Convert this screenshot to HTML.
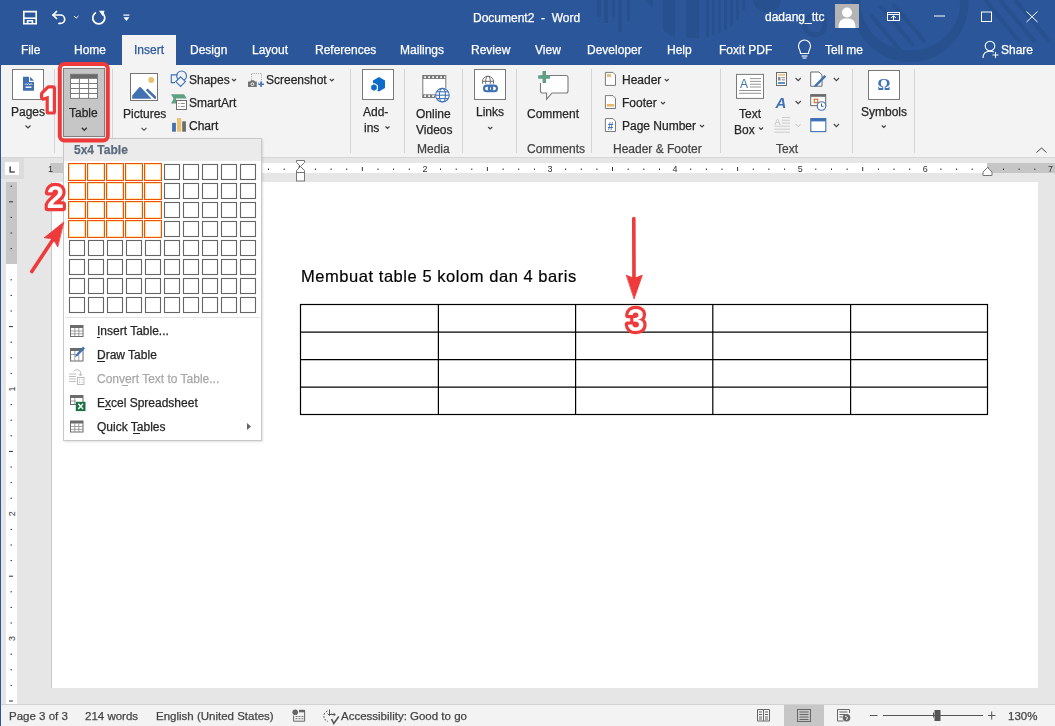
<!DOCTYPE html>
<html><head><meta charset="utf-8">
<style>
*{margin:0;padding:0;box-sizing:border-box}
html,body{width:1055px;height:726px;overflow:hidden;background:#E6E6E6;font-family:"Liberation Sans",sans-serif;color:#262626}
.a{position:absolute}
.t{position:absolute;white-space:nowrap;font-size:12px;line-height:14px;will-change:transform;-webkit-text-stroke:0.25px currentColor}
.w{color:#fff}
#title{left:0;top:0;width:1055px;height:65px;background:#2B579A}
#ribbon{left:0;top:65px;width:1055px;height:93px;background:#F3F3F3;border-bottom:1px solid #D6D6D6}
.sep{position:absolute;width:1px;background:#D4D4D4;top:69px;height:84px}
.gl{color:#444}
svg{position:absolute;overflow:visible}
</style></head><body>
<!-- TITLE BAR -->
<div id="title" class="a"></div>
<svg class="a" style="left:0;top:0" width="1055" height="64">
 <g fill="#27508F">
  <rect x="597" y="0" width="4" height="17"/><rect x="604" y="0" width="4" height="23"/><rect x="612" y="0" width="3" height="18"/>
  <rect x="618" y="0" width="4" height="32"/><rect x="627" y="0" width="3" height="21"/>
  <polygon points="646,0 653,0 653,9"/>
  <polygon points="663,0 675,0 675,38 663,30"/>
  <rect x="686" y="0" width="13" height="38"/>
  <rect x="706" y="0" width="3" height="37"/><rect x="712" y="0" width="3" height="35"/><rect x="718" y="0" width="3" height="33"/>
  <rect x="724" y="0" width="3" height="30"/><rect x="730" y="0" width="3" height="26"/><rect x="736" y="0" width="3" height="20"/><rect x="742" y="0" width="3" height="10"/>
  <path d="M852,0 A58,58 0 0 0 969,0 L961,0 A50,50 0 0 1 860,0 Z"/>
  <path d="M753,0 A14,12 0 0 0 781,0 Z"/>
 </g>
 <circle cx="815" cy="25" r="10" fill="none" stroke="#27508F" stroke-width="5"/>
 <circle cx="910" cy="4" r="54" fill="none" stroke="#27508F" stroke-width="8"/>
 <g stroke="#27508F" stroke-width="4">
  <line x1="870" y1="14" x2="900" y2="50"/><line x1="880" y1="6" x2="914" y2="46"/><line x1="893" y1="4" x2="925" y2="42"/>
  <line x1="985" y1="0" x2="1020" y2="42"/><line x1="1000" y1="0" x2="1035" y2="42"/><line x1="1015" y1="0" x2="1050" y2="42"/>
 </g>
</svg>
<!-- QAT icons -->
<svg style="left:0;top:0" width="140" height="36">
 <g fill="none" stroke="#fff" stroke-width="1.6">
  <path d="M23.8,11.6 H36.2 V23.8 H23.8 Z"/>
  <path d="M23.8,18.2 H36.2"/>
  <path d="M27.6,23.8 V20.8 H32.4 V23.8"/>
 </g>
 <g fill="none" stroke="#fff" stroke-width="1.7" stroke-linecap="round">
  <path d="M53,15 H60.5 A4.2,4.2 0 0 1 60.5,23.4 H59"/>
  <path d="M56.5,11.5 L53,15 L56.5,18.5"/>
 </g>
 <path d="M74,16 L76.2,18.2 L78.4,16" fill="none" stroke="#fff" stroke-width="1"/>
 <g fill="none" stroke="#fff" stroke-width="1.7">
  <path d="M96,12.5 A6,6 0 1 0 101.5,12.5"/>
 </g>
 <path d="M99,10.8 L104.5,10.8 L102.8,16.2 Z" fill="#fff"/>
 <rect x="123.4" y="14.5" width="6" height="1.2" fill="#fff"/>
 <path d="M123.4,17.2 H129.4 L126.4,21 Z" fill="#fff"/>
</svg>
<div class="t w" style="left:473px;top:11px">Document2&nbsp; -&nbsp; Word</div>
<div class="t w" style="left:765px;top:10px">dadang_ttc</div>
<div class="a" style="left:835px;top:4px;width:24px;height:24px;background:#B4B4B4;overflow:hidden">
 <svg style="left:0;top:0" width="24" height="24"><circle cx="12" cy="8.5" r="5" fill="#fff"/><path d="M3.5,24 C3.5,16 7,14.5 12,14.5 C17,14.5 20.5,16 20.5,24 Z" fill="#fff"/></svg>
</div>
<svg style="left:880px;top:0" width="175" height="36">
 <g fill="none" stroke="#fff" stroke-width="1">
  <rect x="7.5" y="12.5" width="12" height="8"/>
  <line x1="7.5" y1="14.5" x2="19.5" y2="14.5"/>
  <path d="M11,18 L13.5,15.8 L16,18 M13.5,16 V20.5"/>
  <line x1="54" y1="16" x2="65" y2="16"/>
  <rect x="101.5" y="12" width="10" height="9.5"/>
  <path d="M146.5,11.5 L157.5,22 M157.5,11.5 L146.5,22"/>
 </g>
</svg>
<!-- TABS -->
<div class="a" style="left:122px;top:35px;width:54px;height:30px;background:#F3F3F3"></div>
<div class="t w" style="left:21px;top:43px">File</div>
<div class="t w" style="left:74px;top:43px">Home</div>
<div class="t" style="left:134px;top:43px;color:#2B579A">Insert</div>
<div class="t w" style="left:190px;top:43px">Design</div>
<div class="t w" style="left:252px;top:43px">Layout</div>
<div class="t w" style="left:315px;top:43px">References</div>
<div class="t w" style="left:400px;top:43px">Mailings</div>
<div class="t w" style="left:471px;top:43px">Review</div>
<div class="t w" style="left:535px;top:43px">View</div>
<div class="t w" style="left:587px;top:43px">Developer</div>
<div class="t w" style="left:667px;top:43px">Help</div>
<div class="t w" style="left:719px;top:43px">Foxit PDF</div>
<div class="t w" style="left:825px;top:43px">Tell me</div>
<div class="t w" style="left:1001px;top:43px">Share</div>
<svg style="left:795px;top:38px" width="240" height="24">
 <g fill="none" stroke="#fff" stroke-width="1.1">
  <path d="M5.5,15.5 C5.5,12 3.5,11 3.5,8 A6,6 0 0 1 15.5,8 C15.5,11 13.5,12 13.5,15.5 Z"/>
  <line x1="6.5" y1="18" x2="12.5" y2="18"/><line x1="7.5" y1="20" x2="11.5" y2="20"/>
  <circle cx="195" cy="8" r="4.8"/>
  <path d="M188,20 C188,15.5 190.5,13.2 195,13.2 C196.5,13.2 197.8,13.5 198.8,14"/>
  <path d="M197.5,17 H203.5 M200.5,14 V20"/>
 </g>
</svg>
<!-- RIBBON -->

<div id="ribbon" class="a"></div>
<div class="sep" style="left:54px"></div>
<div class="sep" style="left:112px"></div>
<div class="sep" style="left:350px"></div>
<div class="sep" style="left:404px"></div>
<div class="sep" style="left:462px"></div>
<div class="sep" style="left:516px"></div>
<div class="sep" style="left:591px"></div>
<div class="sep" style="left:720px"></div>
<div class="sep" style="left:852px"></div>
<div class="sep" style="left:914px"></div>
<!-- Pages -->
<div class="a" style="left:12px;top:69px;width:32px;height:31px;background:#fff;border:1px solid #7A7A7A"></div>
<svg style="left:0;top:64px" width="120" height="90">
 <path d="M23,12.8 H29 V18 H34 V26.8 H23 Z" fill="#3F6FB1"/>
 <path d="M30.1,12.8 L34,16.8 H30.1 Z" fill="#3F6FB1"/>
 <path d="M25,20.8 L26.2,19.6 L27.4,20.8 L28.6,19.6 L29.8,20.8 L31,19.6 L32.2,20.8" fill="none" stroke="#fff" stroke-width="0.9"/>
 <rect x="25.5" y="22.5" width="6" height="1.4" fill="#fff"/>
 <path d="M25.5,61.5 L28,64 L30.5,61.5" fill="none" stroke="#444" stroke-width="1.2"/>
</svg>
<div class="t" style="left:11px;top:105px">Pages</div>
<!-- Table pressed -->
<div class="a" style="left:63px;top:68px;width:42px;height:69px;background:#C6C6C6;border:1px solid #808080"></div>
<svg style="left:0;top:64px" width="120" height="90">
 <rect x="70" y="9.9" width="28" height="25" fill="#fff"/>
 <rect x="70" y="9.9" width="28" height="4.9" fill="#6B6B6B"/>
 <g fill="none" stroke="#7A7A7A" stroke-width="1">
  <rect x="70.5" y="10.4" width="27" height="24"/>
  <line x1="79.4" y1="14.5" x2="79.4" y2="34.5"/><line x1="88.6" y1="14.5" x2="88.6" y2="34.5"/>
  <line x1="70.5" y1="19.5" x2="97.5" y2="19.5"/><line x1="70.5" y1="24.5" x2="97.5" y2="24.5"/><line x1="70.5" y1="29.5" x2="97.5" y2="29.5"/>
 </g>
 <path d="M81.8,63.8 L84.3,66.3 L86.8,63.8" fill="none" stroke="#333" stroke-width="1.3"/>
</svg>
<div class="t" style="left:69px;top:106px">Table</div>
<!-- Pictures -->
<div class="a" style="left:130px;top:73px;width:28px;height:28px;background:#fff;border:1px solid #737373"></div>
<svg style="left:0;top:64px" width="360" height="90">
 <circle cx="151.2" cy="16" r="2.9" fill="#EBC16D"/>
 <path d="M132.2,34.8 V31.5 L139.3,23.3 Q140,22.6 140.8,23.3 L151.5,34.8 Z" fill="#4372B3"/>
 <path d="M145.8,26.2 L147.6,24.6 L156,32.4 V34.8 H154.4 Z" fill="#4372B3"/>
 <path d="M141.5,63.8 L144,66.3 L146.5,63.8" fill="none" stroke="#444" stroke-width="1.1"/>
 <!-- shapes -->
 <g fill="none" stroke="#3D72B8" stroke-width="1.15">
  <path d="M177.5,10.8 H171.3 V18.6 H175"/>
  <circle cx="181.6" cy="11.9" r="4.9"/>
 </g>
 <path d="M180.6,12.8 L185.4,17.6 L180.6,22.4 L175.8,17.6 Z" fill="#F3F3F3" stroke="#3D72B8" stroke-width="1.15"/>
 <path d="M232,15 L234,17 L236,15" fill="none" stroke="#444" stroke-width="1.2"/>
 <!-- smartart -->
 <path d="M171,30.2 H184 L186.8,34.5 H176 V39.5 H171 L173.6,34.8 Z" fill="#5FA084"/>
 <rect x="176.5" y="36.5" width="10" height="9" fill="#fff" stroke="#6E6E6E" stroke-width="1"/>
 <g fill="#8A8A8A"><rect x="178.3" y="39" width="1.2" height="1"/><rect x="180.8" y="39" width="4" height="1"/><rect x="178.3" y="42" width="1.2" height="1"/><rect x="180.8" y="42" width="4" height="1"/></g>
 <!-- chart -->
 <rect x="172.1" y="58.8" width="3.8" height="8.9" fill="#4372B3"/>
 <rect x="177" y="54.1" width="4.2" height="13.6" fill="#EBC16D"/>
 <rect x="182.2" y="57.3" width="3.7" height="10.4" fill="#6B6B6B"/>
 <!-- screenshot -->
 <rect x="251.5" y="9.5" width="10" height="9.5" fill="none" stroke="#8E8E8E" stroke-width="0.8" stroke-dasharray="1,1.2"/>
 <path d="M248,17.6 H250 L251,16.2 H254 L255,17.6 H256.8 V22.9 H248 Z" fill="#737373"/>
 <circle cx="252.4" cy="20.2" r="1.4" fill="none" stroke="#fff" stroke-width="0.9"/>
 <path d="M258.3,20.2 H263.9 M261.1,17.4 V23" stroke="#3D72B8" stroke-width="1.6"/>
 <path d="M329.8,15 L331.8,17 L333.8,15" fill="none" stroke="#444" stroke-width="1.2"/>
</svg>
<div class="t" style="left:123px;top:107px">Pictures</div>
<div class="t" style="left:189px;top:73px">Shapes</div>
<div class="t" style="left:189px;top:96px">SmartArt</div>
<div class="t" style="left:189px;top:119px">Chart</div>
<div class="t" style="left:266px;top:73px">Screenshot</div>


<!-- Add-ins -->
<div class="a" style="left:362px;top:69px;width:32px;height:31px;background:#fff;border:1px solid #7A7A7A"></div>
<div class="a" style="left:474px;top:69px;width:32px;height:31px;background:#fff;border:1px solid #7A7A7A"></div>
<div class="a" style="left:868px;top:70px;width:32px;height:30px;background:#fff;border:1px solid #7A7A7A"></div>
<svg style="left:0;top:0" width="1055" height="160">
 <path d="M379,77 L385,80.5 V88 L379,91.5 L373,88 V80.5 Z" fill="#0B6CCB"/>
 <path d="M374,83.6 L377.4,85.5 V89.5 L374,91.4 L370.6,89.5 V85.5 Z" fill="#0B6CCB" stroke="#fff" stroke-width="1.2"/>
 <path d="M385.5,126.5 L387.5,128.5 L389.5,126.5" fill="none" stroke="#444" stroke-width="1.2"/>
 <!-- online video -->
 <rect x="422.8" y="75.5" width="23" height="22" fill="#fff" stroke="#7A7A7A" stroke-width="1"/>
 <rect x="422.8" y="75.5" width="23" height="3.5" fill="#7A7A7A"/>
 <rect x="422.8" y="94.3" width="23" height="3.5" fill="#7A7A7A"/>
 <g fill="#fff"><rect x="424.2" y="76.3" width="1.8" height="1.8"/><rect x="428.2" y="76.3" width="1.8" height="1.8"/><rect x="432.2" y="76.3" width="1.8" height="1.8"/><rect x="436.2" y="76.3" width="1.8" height="1.8"/><rect x="440.2" y="76.3" width="1.8" height="1.8"/><rect x="444" y="76.3" width="1.3" height="1.8"/>
 <rect x="424.2" y="95.2" width="1.8" height="1.8"/><rect x="428.2" y="95.2" width="1.8" height="1.8"/><rect x="432.2" y="95.2" width="1.8" height="1.8"/></g>
 <circle cx="442.4" cy="95.2" r="7.6" fill="#fff"/>
 <g fill="none" stroke="#3F72B5" stroke-width="1.1">
  <circle cx="442.4" cy="95.2" r="6.8"/><ellipse cx="442.4" cy="95.2" rx="3" ry="6.8"/>
  <line x1="435.6" y1="95.2" x2="449.2" y2="95.2"/><line x1="436.6" y1="91.8" x2="448.2" y2="91.8"/><line x1="436.6" y1="98.6" x2="448.2" y2="98.6"/>
 </g>
 <!-- links -->
 <g fill="none" stroke="#6B6B6B" stroke-width="1">
  <circle cx="488" cy="81.8" r="5.6"/><ellipse cx="488" cy="81.8" rx="2.4" ry="5.6"/><line x1="482.4" y1="81.3" x2="493.6" y2="81.3"/>
 </g>
 <rect x="481" y="83.8" width="18" height="9.5" fill="#fff"/>
 <g fill="none" stroke="#3F72B5" stroke-width="2.1">
  <rect x="484" y="85.6" width="8.2" height="5.6" rx="2.8"/><rect x="488.8" y="85.6" width="8.2" height="5.6" rx="2.8"/>
 </g>
 <path d="M488.2,127 L490.2,129 L492.2,127" fill="none" stroke="#444" stroke-width="1.2"/>
 <!-- comment -->
 <path d="M541.5,75.5 H566 A2,2 0 0 1 568,77.5 V91 A2,2 0 0 1 566,93 H552 L546.6,99.2 V93 H542.2 A1.7,1.7 0 0 1 540.5,91.3 V83" fill="#fff" stroke="#7A7A7A" stroke-width="1.1"/>
 <path d="M542.5,71 H546 V75.3 H550 V78.8 H546 V83 H542.5 V78.8 H538.2 V75.3 H542.5 Z" fill="#5FA084"/>
 <!-- header footer icons -->
 <g fill="#fff" stroke="#7A7A7A" stroke-width="1">
  <path d="M605.4,72.4 H613 L615.5,75 V85.4 H605.4 Z"/>
  <path d="M605.4,95.6 H613 L615.5,98.2 V108.5 H605.4 Z"/>
  <path d="M605.4,118.6 H613 L615.5,121.2 V131.5 H605.4 Z"/>
 </g>
 <rect x="606.8" y="74.2" width="4.2" height="2.6" fill="#E8B86A"/>
 <rect x="606.8" y="104" width="7.3" height="2.6" fill="#E8B86A"/>
 <text x="610.6" y="130" font-family="Liberation Sans" font-weight="bold" font-size="10" fill="#3F72B5" text-anchor="middle">#</text>
 <g fill="none" stroke="#444" stroke-width="1.1">
  <path d="M664.8,79 L666.8,81 L668.8,79"/><path d="M661,102 L663,104 L665,102"/><path d="M700,125 L702,127 L704,125"/>
  <path d="M759,127.5 L761,129.5 L763,127.5"/>
  <path d="M795.6,78 L798.2,80.6 L800.8,78"/><path d="M795.6,101 L798.2,103.6 L800.8,101"/>
  <path d="M833.8,78 L836.4,80.6 L839,78"/><path d="M833.8,124 L836.4,126.6 L839,124"/>
  <path d="M881.8,125.5 L883.8,127.5 L885.8,125.5"/>
 </g>
 <path d="M795.6,124 L798.2,126.6 L800.8,124" fill="none" stroke="#BDBDBD" stroke-width="1"/>
 <path d="M1036.5,152.5 L1041.5,148 L1046.5,152.5" fill="none" stroke="#444" stroke-width="1"/>
 <!-- text box -->
 <rect x="736.5" y="74.4" width="27" height="24" fill="#fff" stroke="#7A7A7A" stroke-width="1"/>
 <text x="740" y="87.5" font-family="Liberation Sans" font-size="12" fill="#3F72B5">A</text>
 <g stroke="#8A8A8A" stroke-width="0.9"><line x1="750" y1="78.6" x2="761" y2="78.6"/><line x1="750" y1="81.4" x2="761" y2="81.4"/><line x1="750" y1="84.2" x2="761" y2="84.2"/><line x1="750" y1="87" x2="761" y2="87"/><line x1="739" y1="90.5" x2="761" y2="90.5"/><line x1="739" y1="93.3" x2="761" y2="93.3"/></g>
 <!-- quick parts -->
 <rect x="776.5" y="72.5" width="10" height="13" fill="#fff" stroke="#6B6B6B" stroke-width="1"/>
 <rect x="778" y="74.2" width="7" height="1.4" fill="#E8B86A"/>
 <rect x="778" y="77" width="2.5" height="3.5" fill="#8A8A8A"/>
 <rect x="781.5" y="77.2" width="3.5" height="1" fill="#8A8A8A"/><rect x="781.5" y="79.4" width="3.5" height="1" fill="#8A8A8A"/>
 <rect x="778" y="82.2" width="7" height="1.6" fill="#3F72B5"/>
 <!-- wordart -->
 <text x="775.5" y="107.6" font-family="Liberation Sans" font-weight="bold" font-style="italic" font-size="15" fill="#3F72B5">A</text>
 <!-- drop cap -->
 <text x="774.5" y="125" font-family="Liberation Sans" font-size="9" fill="#BDBDBD">A</text>
 <g stroke="#C8C8C8" stroke-width="0.9"><line x1="782" y1="117.5" x2="790" y2="117.5"/><line x1="782" y1="120.3" x2="790" y2="120.3"/><line x1="782" y1="123.1" x2="790" y2="123.1"/><line x1="774.5" y1="126.2" x2="790" y2="126.2"/><line x1="774.5" y1="129.2" x2="790" y2="129.2"/><line x1="774.5" y1="132.2" x2="790" y2="132.2"/></g>
 <!-- signature -->
 <path d="M810.7,72 H819 L822,75 V86.2 H810.7 Z" fill="#fff" stroke="#6B6B6B" stroke-width="1"/>
 <path d="M824.5,75 L826.2,76.7 L816.5,86.4 L814,87 L814.8,84.7 Z" fill="#3F72B5"/>
 <!-- date time -->
 <rect x="810.7" y="94.6" width="15" height="11" fill="#fff" stroke="#6B6B6B" stroke-width="1"/>
 <rect x="810.7" y="94.6" width="15" height="2.2" fill="#6B6B6B"/>
 <rect x="814.2" y="99.2" width="3.5" height="3.5" fill="none" stroke="#D86A1C" stroke-width="1.1"/>
 <circle cx="821.5" cy="106" r="4.3" fill="#fff" stroke="#3F72B5" stroke-width="1.1"/>
 <path d="M821.5,103.5 V106.3 H823.5" fill="none" stroke="#444" stroke-width="0.9"/>
 <!-- object -->
 <rect x="810.8" y="118.6" width="15" height="13" fill="#fff" stroke="#3F72B5" stroke-width="1.1"/>
 <rect x="810.8" y="118.6" width="15" height="2.8" fill="#3F72B5"/>
 <!-- omega -->
 <text x="884" y="90" font-family="Liberation Serif" font-weight="bold" font-size="16" fill="#3F72B5" text-anchor="middle">Ω</text>
</svg>
<div class="t" style="left:363px;top:105px">Add-</div>
<div class="t" style="left:364px;top:121px">ins</div>
<div class="t" style="left:416px;top:107px">Online</div>
<div class="t" style="left:416px;top:123px">Videos</div>
<div class="t gl" style="left:417px;top:142px">Media</div>
<div class="t" style="left:476px;top:105px">Links</div>
<div class="t" style="left:527px;top:107px">Comment</div>
<div class="t gl" style="left:527px;top:142px">Comments</div>
<div class="t" style="left:622px;top:73px">Header</div>
<div class="t" style="left:622px;top:96px">Footer</div>
<div class="t" style="left:622px;top:119px">Page Number</div>
<div class="t gl" style="left:613px;top:142px">Header &amp; Footer</div>
<div class="t" style="left:739px;top:107px">Text</div>
<div class="t" style="left:734px;top:123px">Box</div>
<div class="t gl" style="left:776px;top:142px">Text</div>
<div class="t" style="left:861px;top:105px">Symbols</div>

<!-- DOC AREA -->
<!-- RULERS -->
<div class="a" style="left:1px;top:158px;width:23px;height:21px;background:#DCDCDC"></div>
<div class="a" style="left:5px;top:162px;width:14px;height:13px;background:#fff"></div>
<svg style="left:0;top:0" width="30" height="180"><path d="M10.2,166.5 V172 H14.8" fill="none" stroke="#555" stroke-width="1.7"/></svg>
<div class="a" style="left:50px;top:163px;width:1005px;height:10px;background:#fff"></div>
<div class="a" style="left:50px;top:163px;width:125px;height:10px;background:#C6C6C6"></div>
<div class="a" style="left:987px;top:163px;width:68px;height:10px;background:#C6C6C6"></div>
<svg style="left:0;top:0" width="1055" height="190">
 <g fill="#333" font-family="Liberation Sans" font-size="9">
<text x="50.5" y="172" text-anchor="middle">1</text>
<rect x="64.7" y="168.5" width="1" height="1.5"/>
<rect x="80.4" y="168.5" width="1" height="1.5"/>
<rect x="96.0" y="168.5" width="1" height="1.5"/>
<rect x="111.6" y="167" width="1" height="4"/>
<rect x="127.3" y="168.5" width="1" height="1.5"/>
<rect x="142.9" y="168.5" width="1" height="1.5"/>
<rect x="158.6" y="168.5" width="1" height="1.5"/>
<rect x="189.8" y="168.5" width="1" height="1.5"/>
<rect x="205.5" y="168.5" width="1" height="1.5"/>
<rect x="221.1" y="168.5" width="1" height="1.5"/>
<rect x="236.8" y="167" width="1" height="4"/>
<rect x="252.4" y="168.5" width="1" height="1.5"/>
<rect x="268.0" y="168.5" width="1" height="1.5"/>
<rect x="283.7" y="168.5" width="1" height="1.5"/>
<text x="299.8" y="172" text-anchor="middle">1</text>
<rect x="314.9" y="168.5" width="1" height="1.5"/>
<rect x="330.6" y="168.5" width="1" height="1.5"/>
<rect x="346.2" y="168.5" width="1" height="1.5"/>
<rect x="361.8" y="167" width="1" height="4"/>
<rect x="377.5" y="168.5" width="1" height="1.5"/>
<rect x="393.1" y="168.5" width="1" height="1.5"/>
<rect x="408.8" y="168.5" width="1" height="1.5"/>
<text x="424.9" y="172" text-anchor="middle">2</text>
<rect x="440.0" y="168.5" width="1" height="1.5"/>
<rect x="455.7" y="168.5" width="1" height="1.5"/>
<rect x="471.3" y="168.5" width="1" height="1.5"/>
<rect x="486.9" y="167" width="1" height="4"/>
<rect x="502.6" y="168.5" width="1" height="1.5"/>
<rect x="518.2" y="168.5" width="1" height="1.5"/>
<rect x="533.9" y="168.5" width="1" height="1.5"/>
<text x="550.0" y="172" text-anchor="middle">3</text>
<rect x="565.1" y="168.5" width="1" height="1.5"/>
<rect x="580.8" y="168.5" width="1" height="1.5"/>
<rect x="596.4" y="168.5" width="1" height="1.5"/>
<rect x="612.0" y="167" width="1" height="4"/>
<rect x="627.7" y="168.5" width="1" height="1.5"/>
<rect x="643.3" y="168.5" width="1" height="1.5"/>
<rect x="659.0" y="168.5" width="1" height="1.5"/>
<text x="675.1" y="172" text-anchor="middle">4</text>
<rect x="690.2" y="168.5" width="1" height="1.5"/>
<rect x="705.9" y="168.5" width="1" height="1.5"/>
<rect x="721.5" y="168.5" width="1" height="1.5"/>
<rect x="737.1" y="167" width="1" height="4"/>
<rect x="752.8" y="168.5" width="1" height="1.5"/>
<rect x="768.4" y="168.5" width="1" height="1.5"/>
<rect x="784.1" y="168.5" width="1" height="1.5"/>
<text x="800.2" y="172" text-anchor="middle">5</text>
<rect x="815.3" y="168.5" width="1" height="1.5"/>
<rect x="831.0" y="168.5" width="1" height="1.5"/>
<rect x="846.6" y="168.5" width="1" height="1.5"/>
<rect x="862.2" y="167" width="1" height="4"/>
<rect x="877.9" y="168.5" width="1" height="1.5"/>
<rect x="893.5" y="168.5" width="1" height="1.5"/>
<rect x="909.2" y="168.5" width="1" height="1.5"/>
<text x="925.3" y="172" text-anchor="middle">6</text>
<rect x="940.4" y="168.5" width="1" height="1.5"/>
<rect x="956.1" y="168.5" width="1" height="1.5"/>
<rect x="971.7" y="168.5" width="1" height="1.5"/>
<rect x="987.3" y="167" width="1" height="4"/>
<rect x="1003.0" y="168.5" width="1" height="1.5"/>
<rect x="1018.6" y="168.5" width="1" height="1.5"/>
<rect x="1034.3" y="168.5" width="1" height="1.5"/>
<text x="1050.4" y="172" text-anchor="middle">7</text>
 </g>
 <path d="M296.5,160.5 H304.5 V162.5 L300.5,166.5 L304.5,170.5 V172.5 H296.5 V170.5 L300.5,166.5 L296.5,162.5 Z" fill="#fff" stroke="#777" stroke-width="1"/>
 <rect x="296.5" y="172.5" width="8" height="8.5" fill="#fff" stroke="#777" stroke-width="1"/>
 <path d="M987.5,167.5 L992,172 V175.5 H983 V172 Z" fill="#fff" stroke="#777" stroke-width="1"/>
</svg>
<div class="a" style="left:6px;top:182px;width:11px;height:522px;background:#fff"></div>
<div class="a" style="left:6px;top:182px;width:11px;height:82px;background:#C6C6C6"></div>
<svg style="left:0;top:0" width="30" height="726">
 <g fill="#333" font-family="Liberation Sans" font-size="9">
<rect x="10.5" y="185.7" width="1.5" height="1"/>
<rect x="9" y="201.3" width="4" height="1"/>
<rect x="10.5" y="216.9" width="1.5" height="1"/>
<rect x="10.5" y="232.5" width="1.5" height="1"/>
<rect x="10.5" y="248.1" width="1.5" height="1"/>
<rect x="10.5" y="279.3" width="1.5" height="1"/>
<rect x="10.5" y="294.9" width="1.5" height="1"/>
<rect x="10.5" y="310.5" width="1.5" height="1"/>
<rect x="9" y="326.1" width="4" height="1"/>
<rect x="10.5" y="341.7" width="1.5" height="1"/>
<rect x="10.5" y="357.3" width="1.5" height="1"/>
<rect x="10.5" y="372.9" width="1.5" height="1"/>
<text transform="translate(14.5,389.0) rotate(-90)" text-anchor="middle">1</text>
<rect x="10.5" y="404.1" width="1.5" height="1"/>
<rect x="10.5" y="419.7" width="1.5" height="1"/>
<rect x="10.5" y="435.3" width="1.5" height="1"/>
<rect x="9" y="450.9" width="4" height="1"/>
<rect x="10.5" y="466.5" width="1.5" height="1"/>
<rect x="10.5" y="482.1" width="1.5" height="1"/>
<rect x="10.5" y="497.7" width="1.5" height="1"/>
<text transform="translate(14.5,513.8) rotate(-90)" text-anchor="middle">2</text>
<rect x="10.5" y="528.9" width="1.5" height="1"/>
<rect x="10.5" y="544.5" width="1.5" height="1"/>
<rect x="10.5" y="560.1" width="1.5" height="1"/>
<rect x="9" y="575.7" width="4" height="1"/>
<rect x="10.5" y="591.3" width="1.5" height="1"/>
<rect x="10.5" y="606.9" width="1.5" height="1"/>
<rect x="10.5" y="622.5" width="1.5" height="1"/>
<text transform="translate(14.5,638.6) rotate(-90)" text-anchor="middle">3</text>
<rect x="10.5" y="653.7" width="1.5" height="1"/>
<rect x="10.5" y="669.3" width="1.5" height="1"/>
<rect x="10.5" y="684.9" width="1.5" height="1"/>
<rect x="9" y="700.5" width="4" height="1"/>
 </g>
</svg>
<!-- PAGE -->
<div class="a" style="left:52px;top:182px;width:986px;height:506px;background:#fff"></div>
<div class="a" style="left:51px;top:182px;width:1px;height:506px;background:#C8C8C8"></div>
<div class="a" style="left:1px;top:704px;width:1054px;height:1px;background:#D2D2D2"></div>
<div class="a" style="left:1px;top:705px;width:1054px;height:21px;background:#F3F3F3"></div>
<div class="a" style="left:301px;top:266px;font-size:16.5px;line-height:20px;letter-spacing:0.55px;color:#000;white-space:nowrap;will-change:transform;-webkit-text-stroke:0.2px #000">Membuat table 5 kolom dan 4 baris</div>
<svg style="left:0;top:0" width="1055" height="726">
 <g fill="none" stroke="#000" stroke-width="1.2">
  <rect x="300.5" y="304.5" width="687" height="110"/>
  <line x1="438.4" y1="304.5" x2="438.4" y2="414.5"/><line x1="575.6" y1="304.5" x2="575.6" y2="414.5"/><line x1="712.8" y1="304.5" x2="712.8" y2="414.5"/><line x1="850.6" y1="304.5" x2="850.6" y2="414.5"/>
  <line x1="300.5" y1="332.2" x2="987.5" y2="332.2"/><line x1="300.5" y1="359.7" x2="987.5" y2="359.7"/><line x1="300.5" y1="387.2" x2="987.5" y2="387.2"/>
 </g>
</svg>

<div class="a" style="left:0;top:0;width:1px;height:726px;background:#2B579A"></div>

<!-- MENU -->
<div class="a" style="left:63px;top:138px;width:199px;height:303px;background:#fff;border:1px solid #C8C8C8;box-shadow:1px 1px 2px rgba(0,0,0,0.12)"></div>
<div class="a" style="left:64px;top:139px;width:197px;height:22px;background:#EBEBEB"></div>
<div class="t" style="left:74px;top:143px;font-weight:bold;color:#5C6B7E">5x4 Table</div>
<svg style="left:0;top:0" width="300" height="450">
<rect x="68.5" y="163.5" width="17" height="17" fill="#fff" stroke="#EE5014" stroke-width="1"/><rect x="69.5" y="164.5" width="15" height="15" fill="none" stroke="#FFE7A0" stroke-width="1"/>
<rect x="87.5" y="163.5" width="17" height="17" fill="#fff" stroke="#EE5014" stroke-width="1"/><rect x="88.5" y="164.5" width="15" height="15" fill="none" stroke="#FFE7A0" stroke-width="1"/>
<rect x="106.5" y="163.5" width="17" height="17" fill="#fff" stroke="#EE5014" stroke-width="1"/><rect x="107.5" y="164.5" width="15" height="15" fill="none" stroke="#FFE7A0" stroke-width="1"/>
<rect x="125.5" y="163.5" width="17" height="17" fill="#fff" stroke="#EE5014" stroke-width="1"/><rect x="126.5" y="164.5" width="15" height="15" fill="none" stroke="#FFE7A0" stroke-width="1"/>
<rect x="144.5" y="163.5" width="17" height="17" fill="#fff" stroke="#EE5014" stroke-width="1"/><rect x="145.5" y="164.5" width="15" height="15" fill="none" stroke="#FFE7A0" stroke-width="1"/>
<rect x="164.5" y="164.5" width="15" height="15" fill="#fff" stroke="#656565" stroke-width="1.1"/>
<rect x="183.5" y="164.5" width="15" height="15" fill="#fff" stroke="#656565" stroke-width="1.1"/>
<rect x="202.5" y="164.5" width="15" height="15" fill="#fff" stroke="#656565" stroke-width="1.1"/>
<rect x="221.5" y="164.5" width="15" height="15" fill="#fff" stroke="#656565" stroke-width="1.1"/>
<rect x="240.5" y="164.5" width="15" height="15" fill="#fff" stroke="#656565" stroke-width="1.1"/>
<rect x="68.5" y="182.5" width="17" height="17" fill="#fff" stroke="#EE5014" stroke-width="1"/><rect x="69.5" y="183.5" width="15" height="15" fill="none" stroke="#FFE7A0" stroke-width="1"/>
<rect x="87.5" y="182.5" width="17" height="17" fill="#fff" stroke="#EE5014" stroke-width="1"/><rect x="88.5" y="183.5" width="15" height="15" fill="none" stroke="#FFE7A0" stroke-width="1"/>
<rect x="106.5" y="182.5" width="17" height="17" fill="#fff" stroke="#EE5014" stroke-width="1"/><rect x="107.5" y="183.5" width="15" height="15" fill="none" stroke="#FFE7A0" stroke-width="1"/>
<rect x="125.5" y="182.5" width="17" height="17" fill="#fff" stroke="#EE5014" stroke-width="1"/><rect x="126.5" y="183.5" width="15" height="15" fill="none" stroke="#FFE7A0" stroke-width="1"/>
<rect x="144.5" y="182.5" width="17" height="17" fill="#fff" stroke="#EE5014" stroke-width="1"/><rect x="145.5" y="183.5" width="15" height="15" fill="none" stroke="#FFE7A0" stroke-width="1"/>
<rect x="164.5" y="183.5" width="15" height="15" fill="#fff" stroke="#656565" stroke-width="1.1"/>
<rect x="183.5" y="183.5" width="15" height="15" fill="#fff" stroke="#656565" stroke-width="1.1"/>
<rect x="202.5" y="183.5" width="15" height="15" fill="#fff" stroke="#656565" stroke-width="1.1"/>
<rect x="221.5" y="183.5" width="15" height="15" fill="#fff" stroke="#656565" stroke-width="1.1"/>
<rect x="240.5" y="183.5" width="15" height="15" fill="#fff" stroke="#656565" stroke-width="1.1"/>
<rect x="68.5" y="201.5" width="17" height="17" fill="#fff" stroke="#EE5014" stroke-width="1"/><rect x="69.5" y="202.5" width="15" height="15" fill="none" stroke="#FFE7A0" stroke-width="1"/>
<rect x="87.5" y="201.5" width="17" height="17" fill="#fff" stroke="#EE5014" stroke-width="1"/><rect x="88.5" y="202.5" width="15" height="15" fill="none" stroke="#FFE7A0" stroke-width="1"/>
<rect x="106.5" y="201.5" width="17" height="17" fill="#fff" stroke="#EE5014" stroke-width="1"/><rect x="107.5" y="202.5" width="15" height="15" fill="none" stroke="#FFE7A0" stroke-width="1"/>
<rect x="125.5" y="201.5" width="17" height="17" fill="#fff" stroke="#EE5014" stroke-width="1"/><rect x="126.5" y="202.5" width="15" height="15" fill="none" stroke="#FFE7A0" stroke-width="1"/>
<rect x="144.5" y="201.5" width="17" height="17" fill="#fff" stroke="#EE5014" stroke-width="1"/><rect x="145.5" y="202.5" width="15" height="15" fill="none" stroke="#FFE7A0" stroke-width="1"/>
<rect x="164.5" y="202.5" width="15" height="15" fill="#fff" stroke="#656565" stroke-width="1.1"/>
<rect x="183.5" y="202.5" width="15" height="15" fill="#fff" stroke="#656565" stroke-width="1.1"/>
<rect x="202.5" y="202.5" width="15" height="15" fill="#fff" stroke="#656565" stroke-width="1.1"/>
<rect x="221.5" y="202.5" width="15" height="15" fill="#fff" stroke="#656565" stroke-width="1.1"/>
<rect x="240.5" y="202.5" width="15" height="15" fill="#fff" stroke="#656565" stroke-width="1.1"/>
<rect x="68.5" y="220.5" width="17" height="17" fill="#fff" stroke="#EE5014" stroke-width="1"/><rect x="69.5" y="221.5" width="15" height="15" fill="none" stroke="#FFE7A0" stroke-width="1"/>
<rect x="87.5" y="220.5" width="17" height="17" fill="#fff" stroke="#EE5014" stroke-width="1"/><rect x="88.5" y="221.5" width="15" height="15" fill="none" stroke="#FFE7A0" stroke-width="1"/>
<rect x="106.5" y="220.5" width="17" height="17" fill="#fff" stroke="#EE5014" stroke-width="1"/><rect x="107.5" y="221.5" width="15" height="15" fill="none" stroke="#FFE7A0" stroke-width="1"/>
<rect x="125.5" y="220.5" width="17" height="17" fill="#fff" stroke="#EE5014" stroke-width="1"/><rect x="126.5" y="221.5" width="15" height="15" fill="none" stroke="#FFE7A0" stroke-width="1"/>
<rect x="144.5" y="220.5" width="17" height="17" fill="#fff" stroke="#EE5014" stroke-width="1"/><rect x="145.5" y="221.5" width="15" height="15" fill="none" stroke="#FFE7A0" stroke-width="1"/>
<rect x="164.5" y="221.5" width="15" height="15" fill="#fff" stroke="#656565" stroke-width="1.1"/>
<rect x="183.5" y="221.5" width="15" height="15" fill="#fff" stroke="#656565" stroke-width="1.1"/>
<rect x="202.5" y="221.5" width="15" height="15" fill="#fff" stroke="#656565" stroke-width="1.1"/>
<rect x="221.5" y="221.5" width="15" height="15" fill="#fff" stroke="#656565" stroke-width="1.1"/>
<rect x="240.5" y="221.5" width="15" height="15" fill="#fff" stroke="#656565" stroke-width="1.1"/>
<rect x="69.5" y="240.5" width="15" height="15" fill="#fff" stroke="#656565" stroke-width="1.1"/>
<rect x="88.5" y="240.5" width="15" height="15" fill="#fff" stroke="#656565" stroke-width="1.1"/>
<rect x="107.5" y="240.5" width="15" height="15" fill="#fff" stroke="#656565" stroke-width="1.1"/>
<rect x="126.5" y="240.5" width="15" height="15" fill="#fff" stroke="#656565" stroke-width="1.1"/>
<rect x="145.5" y="240.5" width="15" height="15" fill="#fff" stroke="#656565" stroke-width="1.1"/>
<rect x="164.5" y="240.5" width="15" height="15" fill="#fff" stroke="#656565" stroke-width="1.1"/>
<rect x="183.5" y="240.5" width="15" height="15" fill="#fff" stroke="#656565" stroke-width="1.1"/>
<rect x="202.5" y="240.5" width="15" height="15" fill="#fff" stroke="#656565" stroke-width="1.1"/>
<rect x="221.5" y="240.5" width="15" height="15" fill="#fff" stroke="#656565" stroke-width="1.1"/>
<rect x="240.5" y="240.5" width="15" height="15" fill="#fff" stroke="#656565" stroke-width="1.1"/>
<rect x="69.5" y="259.5" width="15" height="15" fill="#fff" stroke="#656565" stroke-width="1.1"/>
<rect x="88.5" y="259.5" width="15" height="15" fill="#fff" stroke="#656565" stroke-width="1.1"/>
<rect x="107.5" y="259.5" width="15" height="15" fill="#fff" stroke="#656565" stroke-width="1.1"/>
<rect x="126.5" y="259.5" width="15" height="15" fill="#fff" stroke="#656565" stroke-width="1.1"/>
<rect x="145.5" y="259.5" width="15" height="15" fill="#fff" stroke="#656565" stroke-width="1.1"/>
<rect x="164.5" y="259.5" width="15" height="15" fill="#fff" stroke="#656565" stroke-width="1.1"/>
<rect x="183.5" y="259.5" width="15" height="15" fill="#fff" stroke="#656565" stroke-width="1.1"/>
<rect x="202.5" y="259.5" width="15" height="15" fill="#fff" stroke="#656565" stroke-width="1.1"/>
<rect x="221.5" y="259.5" width="15" height="15" fill="#fff" stroke="#656565" stroke-width="1.1"/>
<rect x="240.5" y="259.5" width="15" height="15" fill="#fff" stroke="#656565" stroke-width="1.1"/>
<rect x="69.5" y="278.5" width="15" height="15" fill="#fff" stroke="#656565" stroke-width="1.1"/>
<rect x="88.5" y="278.5" width="15" height="15" fill="#fff" stroke="#656565" stroke-width="1.1"/>
<rect x="107.5" y="278.5" width="15" height="15" fill="#fff" stroke="#656565" stroke-width="1.1"/>
<rect x="126.5" y="278.5" width="15" height="15" fill="#fff" stroke="#656565" stroke-width="1.1"/>
<rect x="145.5" y="278.5" width="15" height="15" fill="#fff" stroke="#656565" stroke-width="1.1"/>
<rect x="164.5" y="278.5" width="15" height="15" fill="#fff" stroke="#656565" stroke-width="1.1"/>
<rect x="183.5" y="278.5" width="15" height="15" fill="#fff" stroke="#656565" stroke-width="1.1"/>
<rect x="202.5" y="278.5" width="15" height="15" fill="#fff" stroke="#656565" stroke-width="1.1"/>
<rect x="221.5" y="278.5" width="15" height="15" fill="#fff" stroke="#656565" stroke-width="1.1"/>
<rect x="240.5" y="278.5" width="15" height="15" fill="#fff" stroke="#656565" stroke-width="1.1"/>
<rect x="69.5" y="297.5" width="15" height="15" fill="#fff" stroke="#656565" stroke-width="1.1"/>
<rect x="88.5" y="297.5" width="15" height="15" fill="#fff" stroke="#656565" stroke-width="1.1"/>
<rect x="107.5" y="297.5" width="15" height="15" fill="#fff" stroke="#656565" stroke-width="1.1"/>
<rect x="126.5" y="297.5" width="15" height="15" fill="#fff" stroke="#656565" stroke-width="1.1"/>
<rect x="145.5" y="297.5" width="15" height="15" fill="#fff" stroke="#656565" stroke-width="1.1"/>
<rect x="164.5" y="297.5" width="15" height="15" fill="#fff" stroke="#656565" stroke-width="1.1"/>
<rect x="183.5" y="297.5" width="15" height="15" fill="#fff" stroke="#656565" stroke-width="1.1"/>
<rect x="202.5" y="297.5" width="15" height="15" fill="#fff" stroke="#656565" stroke-width="1.1"/>
<rect x="221.5" y="297.5" width="15" height="15" fill="#fff" stroke="#656565" stroke-width="1.1"/>
<rect x="240.5" y="297.5" width="15" height="15" fill="#fff" stroke="#656565" stroke-width="1.1"/>
 <rect x="65" y="317" width="195" height="1" fill="#E2E2E2"/>
 <!-- insert table icon -->
 <g id="tblic">
 <rect x="70.5" y="325.5" width="12.5" height="11" fill="#fff" stroke="#6B6B6B" stroke-width="1"/>
 <rect x="70.5" y="325.5" width="12.5" height="2.5" fill="#6B6B6B"/>
 <g stroke="#8A8A8A" stroke-width="0.8"><line x1="74.8" y1="328" x2="74.8" y2="336.5"/><line x1="78.8" y1="328" x2="78.8" y2="336.5"/><line x1="70.5" y1="331" x2="83" y2="331"/><line x1="70.5" y1="333.8" x2="83" y2="333.8"/></g>
 </g>
 <use href="#tblic" transform="translate(0,95.5)"/>
 <!-- draw table -->
 <rect x="70.5" y="348.5" width="12.5" height="12.5" fill="#fff" stroke="#6B6B6B" stroke-width="1"/>
 <rect x="70.5" y="348.5" width="12.5" height="2.5" fill="#6B6B6B"/>
 <g stroke="#8A8A8A" stroke-width="0.8"><line x1="74.8" y1="351" x2="74.8" y2="361"/><line x1="78.8" y1="355" x2="78.8" y2="361"/><line x1="70.5" y1="354.5" x2="76" y2="354.5"/></g>
 <path d="M83,346.5 L85,348.5 L77.5,356 L75,357 L76,354.5 Z" fill="#3F72B5"/>
 <!-- convert -->
 <g stroke="#B5B5B5" stroke-width="0.9"><line x1="69" y1="374" x2="76" y2="374"/><line x1="69" y1="376.5" x2="76" y2="376.5"/><line x1="69" y1="379" x2="76" y2="379"/><line x1="69" y1="381.5" x2="76" y2="381.5"/></g>
 <path d="M73.5,371.5 A4,4 0 0 1 80.5,372 V375" fill="none" stroke="#B5B5B5" stroke-width="0.9"/>
 <path d="M78.8,374 L80.5,376 L82.2,374" fill="none" stroke="#B5B5B5" stroke-width="0.9"/>
 <rect x="77.5" y="377.5" width="6.5" height="7" fill="#fff" stroke="#B5B5B5" stroke-width="0.9"/>
 <g fill="#B5B5B5"><rect x="79" y="379.3" width="1" height="1"/><rect x="81.5" y="379.3" width="1" height="1"/><rect x="79" y="381.8" width="1" height="1"/><rect x="81.5" y="381.8" width="1" height="1"/></g>
 <!-- excel -->
 <rect x="70.5" y="395.5" width="12.5" height="9" fill="#fff" stroke="#6B6B6B" stroke-width="1"/>
 <rect x="70.5" y="395.5" width="12.5" height="2.5" fill="#6B6B6B"/>
 <g stroke="#8A8A8A" stroke-width="0.8"><line x1="74.8" y1="398" x2="74.8" y2="404.5"/><line x1="70.5" y1="401" x2="76" y2="401"/></g>
 <rect x="75.8" y="401.8" width="9.7" height="9.3" fill="#1D7346"/>
 <path d="M78.3,403.8 L83,409 M83,403.8 L78.3,409" stroke="#fff" stroke-width="1.3"/>
 <path d="M247,423 L251,426.5 L247,430 Z" fill="#666"/>
</svg>
<div class="t" style="left:97px;top:324px">Insert Table...</div>
<div class="t" style="left:97px;top:348px">Draw Table</div>
<div class="t" style="left:97px;top:372px;color:#A8A8A8">Convert Text to Table...</div>
<div class="t" style="left:97px;top:396px">Excel Spreadsheet</div>
<div class="t" style="left:97px;top:420px">Quick Tables</div>
<div class="a" style="left:97px;top:337px;width:3px;height:1px;background:#262626"></div>
<div class="a" style="left:97px;top:361px;width:8px;height:1px;background:#262626"></div>
<div class="a" style="left:122px;top:385px;width:6px;height:1px;background:#A8A8A8"></div>
<div class="a" style="left:105px;top:409px;width:6px;height:1px;background:#262626"></div>
<div class="a" style="left:133px;top:433px;width:7px;height:1px;background:#262626"></div>
<!-- ANNOTATIONS -->
<svg style="left:0;top:0" width="1055" height="726">
 <rect x="59.8" y="64" width="48" height="76.4" rx="4.5" ry="4.5" fill="none" stroke="#EE3A3A" stroke-width="4"/>
 <g font-family="Liberation Sans" font-weight="bold" fill="#fff" stroke="#EE3A3A" stroke-width="6.4" paint-order="stroke" stroke-linejoin="round">
  <path d="M48.8,88.4 H52.8 V111.4 H48.8 V95.8 L43.2,97.4 V94 Z"/>
  <text x="46.8" y="208" font-size="31">2</text>
  <text x="627.3" y="330.5" font-size="31">3</text>
 </g>
 <g stroke="#EE3A3A" stroke-linecap="round" fill="#EE3A3A">
  <line x1="31.8" y1="271.5" x2="54" y2="238" stroke-width="3.6"/>
  <path d="M63.6,222.2 L44.2,237.8 L51,238.4 L55.2,242.4 L57.6,246.8 Z" stroke-width="0.8" stroke-linejoin="round"/>
  <line x1="633.8" y1="218.5" x2="634" y2="280" stroke-width="3.6"/>
  <path d="M626.5,275.2 L632,277.6 L636,277.6 L642.3,275.2 L634.2,298.6 Z" stroke-width="0.8" stroke-linejoin="round"/>
 </g>
</svg>
<!-- STATUS BAR -->
<div class="t" style="left:9px;top:709px;font-size:11.5px;color:#444">Page 3 of 3</div>
<div class="t" style="left:85px;top:709px;font-size:11.5px;color:#444">214 words</div>
<div class="t" style="left:156px;top:709px;font-size:11.5px;color:#444">English (United States)</div>
<div class="t" style="left:341px;top:709px;font-size:11.5px;color:#444">Accessibility: Good to go</div>
<div class="t" style="left:1008px;top:709px;font-size:11.5px;color:#444">130%</div>
<div class="a" style="left:784px;top:705px;width:40px;height:21px;background:#C6C6C6"></div>
<svg style="left:0;top:0" width="1055" height="726">
 <circle cx="295.2" cy="712.2" r="2.8" fill="#666"/>
 <path d="M293.6,715.5 V721.2 H304.6 V710.3 H299.2" fill="none" stroke="#666" stroke-width="1"/>
 <rect x="299" y="710" width="6" height="2.3" fill="#666"/>
 <g fill="#777"><rect x="295.5" y="716" width="2" height="1"/><rect x="298.5" y="716" width="2" height="1"/><rect x="301.5" y="716" width="2" height="1"/><rect x="295.5" y="718.2" width="2" height="1"/><rect x="298.5" y="718.2" width="2" height="1"/><rect x="301.5" y="718.2" width="2" height="1"/><rect x="295.5" y="715" width="0" height="0"/></g>
 <path d="M327.5,711 A5.5,5.5 0 0 0 328,721.5" fill="none" stroke="#555" stroke-width="1" stroke-dasharray="2,1.2"/>
 <path d="M329.5,709.5 V715.5 M327.5,713.5 L329.5,715.5 L331.5,713.5 M331,714.5 H335 M333.5,712.8 L335.2,714.5 L333.5,716.2" fill="none" stroke="#555" stroke-width="1"/>
 <path d="M331.5,719 L333.8,723.5 L338.8,716.5" fill="none" stroke="#555" stroke-width="1.6"/>
 <g fill="none" stroke="#666" stroke-width="1">
  <path d="M757.5,709.5 H763.5 V721 H757.5 Z M763.5,709.5 H769.5 V721 H763.5 Z"/>
  <path d="M759,712 H762 M759,714.5 H762 M759,717 H762 M759,719 H762 M765,712 H768 M765,714.5 H768 M765,717 H768 M765,719 H768"/>
  <rect x="797.5" y="709.5" width="13" height="12"/>
  <path d="M799.5,712 H808.5 M799.5,714.5 H808.5 M799.5,717 H808.5 M799.5,719.5 H808.5"/>
  <path d="M843.5,721 H837.5 V709.5 H849.5 V713"/>
  <path d="M839.5,712 H847.5 M839.5,714.5 H845 M839.5,717 H842.5"/>
 </g>
 <circle cx="846.5" cy="717.8" r="3.8" fill="#666"/>
 <path d="M845,716 L847.5,717.5 L846.5,720" stroke="#F3F3F3" stroke-width="1" fill="none"/>
 <g fill="#555">
  <rect x="870" y="715" width="7.5" height="1"/>
  <rect x="883" y="715" width="100" height="1"/>
  <rect x="988" y="715" width="7.5" height="1"/><rect x="991.2" y="711.5" width="1" height="8"/>
  <rect x="933" y="712.5" width="1" height="5"/>
  <rect x="934.5" y="710" width="6" height="11"/>
 </g>
</svg>
</body></html>
